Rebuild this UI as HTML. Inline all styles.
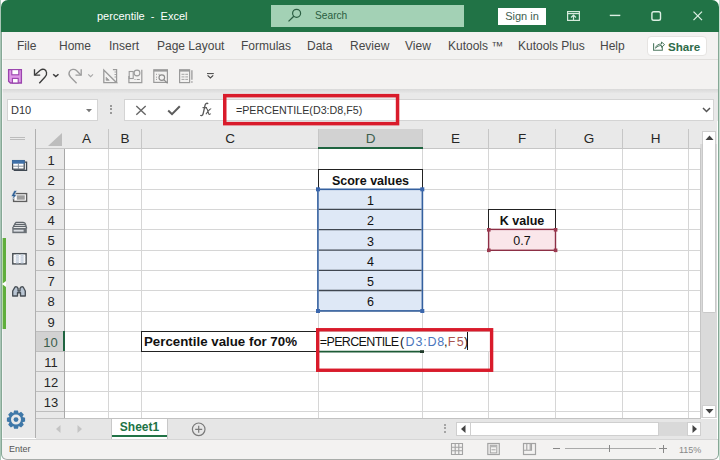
<!DOCTYPE html>
<html><head><meta charset="utf-8">
<style>
*{box-sizing:border-box}
html,body{margin:0;padding:0;width:720px;height:460px;overflow:hidden;background:#fff}
body{position:relative;font-family:"Liberation Sans",sans-serif;color:#333}
.a{position:absolute}
#frameL{left:0;top:0;width:1px;height:460px;background:#a9c6b6}
#frameR{left:719px;top:0;width:1px;height:460px;background:#c9dfd1}
#frame{left:1px;top:32px;width:718px;height:428px;border:1px solid #86a896;border-bottom-color:#a8aca9;border-top:none;border-radius:0 0 6px 6px;pointer-events:none}
#title{left:1px;top:0;width:718px;height:32px;background:#217346;border-radius:7px 7px 0 0}
.ttl{top:9px;font-size:11px;color:#fff;white-space:pre;line-height:14px}
#search{left:271px;top:5px;width:193px;height:22px;background:#a3d1b5}
#signin{left:498px;top:8px;width:48px;height:17px;background:#fff;color:#3f6150;font-size:11px;line-height:17px;text-align:center}
#ribbon{left:1px;top:32px;width:717px;height:58px;background:#f3f2f1}
.tab{top:38px;font-size:12px;color:#474747;white-space:pre;line-height:16px}
#sep1{left:1px;top:59px;width:717px;height:1px;background:#e1dfdd}
#share{left:647px;top:36px;width:60px;height:20px;background:#fff;border:1px solid #e6e4e2;border-radius:4px}
#band{left:1px;top:89px;width:717px;height:4px;background:linear-gradient(#d9d9d9,#e6e6e6)}
#fbar{left:1px;top:93px;width:717px;height:28px;background:#e9e9e9}
.wbox{background:#fff;border:1px solid #d4d4d4}
#panel{left:1px;top:121px;width:35px;height:317px;background:#e9e9e9}
#pline{left:35px;top:129px;width:1px;height:309px;background:#b0b0b0}
#hdr{left:36px;top:121px;width:681px;height:28px;background:#e9e9e9}
#cells{left:64px;top:149px;width:636px;height:270px;background:#fff}
#rhdr{left:36px;top:149px;width:28px;height:269px;background:#e9e9e9}
.hl{position:absolute;left:64px;width:636px;height:1px;background:#d6d6d6}
.vl{position:absolute;top:149px;width:1px;height:269px;background:#d6d6d6}
.chs{position:absolute;top:129px;width:1px;height:20px;background:#c6c6c6}
.rhs{position:absolute;left:36px;width:28px;height:1px;background:#bdbdbd}
.ch{position:absolute;top:129px;height:19px;line-height:19px;text-align:center;font-size:13.5px;color:#262626}
.ch.sel{background:#d2d2d2;color:#3b5e4c}
.rn{position:absolute;left:37px;width:28px;text-align:center;font-size:13px;color:#262626}
.rn.sel{background:#d2d2d2;color:#3b5e4c;left:36px;width:28px;padding-left:1px}
#hdrline{left:36px;top:148px;width:664px;height:1px;background:#c6c6c6}
#rhline{left:64px;top:149px;width:1px;height:269px;background:#a9a9a9}
.cell{position:absolute;font-size:12.5px;color:#111;white-space:pre;line-height:20px}
#vscroll{left:700px;top:144px;width:17px;height:274px;background:#dadada}
#tabbar{left:36px;top:419px;width:681px;height:20px;background:#e6e6e6}
#status{left:1px;top:439px;width:717px;height:20px;background:#f3f2f1;border-top:1px solid #d6d6d6;border-radius:0 0 6px 6px}
</style></head><body>
<div class="a" id="frameL"></div>
<div class="a" id="frameR"></div>
<div class="a" id="title"></div>
<div class="a ttl" style="left:97px">percentile  -  Excel</div>
<div class="a" id="search"></div>
<svg class="a" style="left:286px;top:7px" width="16" height="16" viewBox="286 7 16 16"><circle cx="296.6" cy="13.3" r="4" fill="none" stroke="#2b5e42" stroke-width="1.2"/><line x1="293.8" y1="16.2" x2="288.5" y2="21.4" stroke="#2b5e42" stroke-width="1.3"/></svg>
<div class="a" style="left:315px;top:9px;font-size:10.2px;line-height:14px;color:#2a5d41">Search</div>
<div class="a" id="signin">Sign in</div>
<svg class="a" style="left:567px;top:11px" width="13" height="10" viewBox="0 0 13 10"><rect x="0.6" y="0.6" width="11.8" height="8.8" fill="none" stroke="#d5eadc" stroke-width="1.2"/><line x1="0.6" y1="2.6" x2="12.4" y2="2.6" stroke="#d5eadc" stroke-width="1.2"/><path d="M4 6.5 L6.5 4 L9 6.5 M6.5 4 V9.4" fill="none" stroke="#d5eadc" stroke-width="1.2"/></svg>
<svg class="a" style="left:600px;top:0" width="115" height="30" viewBox="600 0 115 30"><path d="M609.8 15.4 H620.3" stroke="#dcefe3" stroke-width="1.4"/><rect x="651.9" y="11.7" width="8.6" height="8.6" rx="1.8" fill="none" stroke="#dcefe3" stroke-width="1.4"/><path d="M693.5 11.6 L702 20.1 M702 11.6 L693.5 20.1" stroke="#dcefe3" stroke-width="1.3"/></svg>



<div class="a" id="ribbon"></div>
<div class="a tab" style="left:17px">File</div>
<div class="a tab" style="left:59px">Home</div>
<div class="a tab" style="left:109px">Insert</div>
<div class="a tab" style="left:157px">Page Layout</div>
<div class="a tab" style="left:241px">Formulas</div>
<div class="a tab" style="left:307px">Data</div>
<div class="a tab" style="left:350px">Review</div>
<div class="a tab" style="left:405px">View</div>
<div class="a tab" style="left:448px">Kutools ™</div>
<div class="a tab" style="left:518px">Kutools Plus</div>
<div class="a tab" style="left:600px">Help</div>
<div class="a" id="share"></div>
<svg class="a" style="left:650px;top:38px" width="17" height="15" viewBox="650 38 17 15"><path d="M653.6 43.3 V50.2 H662.3 V46" fill="none" stroke="#4f7a62" stroke-width="1.1"/><path d="M655.6 48.2 C656 45.5 658 44 661.5 44 V42 L664.6 44.6 L661.5 47.3 V45.5 C659 45.5 657 46.5 655.6 48.2 Z" fill="none" stroke="#4f7a62" stroke-width="1" stroke-linejoin="round"/></svg>
<div class="a" style="left:668px;top:38.5px;font-size:11.6px;line-height:15px;font-weight:bold;color:#2f6b4a">Share</div>
<div class="a" id="sep1"></div>

<!-- QAT -->
<svg class="a" style="left:0;top:60px" width="220" height="30" viewBox="0 60 220 30">
<path d="M8.6 69.6 H21.4 V83 H10.4 L8.6 81.2 Z" fill="#df9ae8" stroke="#9a44ad" stroke-width="1.3"/>
<rect x="11.8" y="69.6" width="7" height="5.2" fill="#fff" stroke="#9a44ad" stroke-width="1.1"/>
<rect x="12.4" y="78.4" width="5.8" height="4.6" fill="#fff" stroke="#9a44ad" stroke-width="1.1"/>
<path d="M34.5 69.3 V75.1 H40.2" fill="none" stroke="#3c3c3c" stroke-width="1.35"/>
<path d="M34.8 75 L40.5 70 C43 68.3 46 69.5 46.5 72.5 C47 74.5 46 76 45 77 L39.3 83.2" fill="none" stroke="#3c3c3c" stroke-width="1.35"/>
<path d="M53.2 74.2 L55.8 76.6 L58.5 74.2" fill="none" stroke="#3c3c3c" stroke-width="1.5"/>
<path d="M81.2 69.3 V75.1 H75.5" fill="none" stroke="#9c9c9c" stroke-width="1.35"/>
<path d="M80.9 75 L76.5 70.5 C74.5 68.8 71 69 69.5 71.5 C68.5 73.5 69 75.5 70.5 77 L76.6 83.2" fill="none" stroke="#9c9c9c" stroke-width="1.35"/>
<path d="M88.2 74.4 L90.6 76.6 L93 74.4" fill="none" stroke="#a8a8a8" stroke-width="1.2"/>
<path d="M103.8 70 V82.7 H116.6 Z" fill="none" stroke="#9a9a9a" stroke-width="1.3"/>
<path d="M106.2 77.3 V80.3 H109.2 Z" fill="#9a9a9a" stroke="#9a9a9a" stroke-width="0.8"/>
<path d="M112.9 69.6 H116.6 V82.7" fill="none" stroke="#9a9a9a" stroke-width="1.2"/>
<path d="M114.5 72 H116.6 M114.5 74.5 H116.6 M114.5 77 H116.6" stroke="#9a9a9a" stroke-width="0.9"/>
<path d="M128.9 76 V82.7 H141.8 V69.8" fill="none" stroke="#9a9a9a" stroke-width="1.2"/>
<rect x="129.2" y="71.5" width="4" height="7" fill="none" stroke="#9a9a9a" stroke-width="1.1"/>
<circle cx="137" cy="73" r="2.9" fill="none" stroke="#9a9a9a" stroke-width="1.1"/>
<path d="M134.5 79.5 H135.5 M136.7 79.5 H139.8" stroke="#9a9a9a" stroke-width="1"/>
<rect x="153.8" y="69.8" width="13.6" height="12.6" fill="none" stroke="#9a9a9a" stroke-width="1.2"/>
<rect x="153.8" y="69.8" width="13.6" height="1.8" fill="#9a9a9a"/>
<circle cx="161.8" cy="77.6" r="2.8" fill="none" stroke="#8c8c8c" stroke-width="1.2"/>
<path d="M163.8 79.6 L167.6 83.4" stroke="#8c8c8c" stroke-width="1.3"/>
<path d="M156 74.3 H157 M156 77.2 H157 M156 79.4 H157 M158.5 74.3 H159.5" stroke="#9a9a9a" stroke-width="1"/>
<rect x="179.6" y="69.8" width="10" height="12.8" fill="none" stroke="#9a9a9a" stroke-width="1.2"/>
<rect x="179.6" y="69.8" width="10" height="1.8" fill="#9a9a9a"/>
<path d="M181.5 74.3 H188 M181.5 76.9 H188 M181.5 79.4 H188" stroke="#a5a5a5" stroke-width="1" stroke-dasharray="3 0.8"/>
<path d="M191.9 70.2 V79.7 M191.9 81.2 V82.7" stroke="#9a9a9a" stroke-width="1.3"/>
<path d="M207 73.6 H213.8" stroke="#444" stroke-width="1"/>
<path d="M207.6 75.4 L210.4 77.9 L213.2 75.4" fill="none" stroke="#444" stroke-width="1.2"/>
</svg>
<div class="a" id="band"></div>
<div class="a" id="fbar"></div>
<div class="a wbox" style="left:7px;top:99px;width:91px;height:22px"></div>
<div class="a" style="left:11px;top:103px;font-size:11px;line-height:14px;color:#333">D10</div>
<svg class="a" style="left:85.5px;top:108.5px" width="6" height="4" viewBox="0 0 6 4"><path d="M0 0 H6 L3 3.2 Z" fill="#777"/></svg>
<div class="a" style="left:110px;top:105px;width:2px;height:2px;background:#999"></div>
<div class="a" style="left:110px;top:108.3px;width:2px;height:2px;background:#999"></div>
<div class="a" style="left:110px;top:112px;width:2px;height:2px;background:#999"></div>
<div class="a wbox" style="left:124px;top:99px;width:100px;height:22px"></div>
<svg class="a" style="left:135px;top:105px" width="12" height="11" viewBox="0 0 12 11"><path d="M1.3 1 L10.7 9.8 M10.7 1 L1.3 9.8" stroke="#666" stroke-width="1.4"/></svg>
<svg class="a" style="left:167px;top:105px" width="14" height="11" viewBox="0 0 14 11"><path d="M1.2 5.5 L5 9.2 L12.8 1.2" fill="none" stroke="#5c5c5c" stroke-width="2"/></svg>
<svg class="a" style="left:196px;top:100px" width="20" height="18" viewBox="196 100 20 18"><path d="M208.2 103.8 C207.2 102.8 205.6 103.2 205.1 105 L203.2 113.5 C202.7 115.6 201.5 116 200.2 115.2" fill="none" stroke="#5a5a5a" stroke-width="1.3"/><path d="M202.5 107.6 H207" stroke="#5a5a5a" stroke-width="1.1"/><path d="M205.8 108.6 C206.8 108.3 207.3 109 207.7 110.5 L208.6 113.5 C209 114.6 209.8 114.6 210.8 113.7 M211.2 108.8 C210.2 108.5 209.3 109.6 207.8 111.6 L205.9 114.2" fill="none" stroke="#5a5a5a" stroke-width="1.1"/></svg>
<div class="a wbox" style="left:223px;top:99px;width:491px;height:22px"></div>
<div class="a" style="left:236px;top:103px;font-size:10.7px;line-height:14px;color:#333;white-space:pre">=PERCENTILE(D3:D8,F5)</div>
<svg class="a" style="left:702px;top:107px" width="9" height="6" viewBox="0 0 9 6"><path d="M1 1 L4.5 4.5 L8 1" fill="none" stroke="#555" stroke-width="1.5"/></svg>

<div class="a" id="panel"></div>
<div class="a" id="pline"></div>
<div class="a" style="left:10px;top:137px;width:15px;height:1px;background:#bcbcbc"></div>
<div class="a" style="left:10px;top:139px;width:15px;height:1px;background:#bcbcbc"></div>

<div class="a" id="hdr"></div>
<div class="a" id="rhdr"></div>
<div class="a" id="cells"></div>
<div class="hl" style="top:169px"></div>
<div class="hl" style="top:189px"></div>
<div class="hl" style="top:209px"></div>
<div class="hl" style="top:229px"></div>
<div class="hl" style="top:250px"></div>
<div class="hl" style="top:270px"></div>
<div class="hl" style="top:290px"></div>
<div class="hl" style="top:311px"></div>
<div class="hl" style="top:331px"></div>
<div class="hl" style="top:351px"></div>
<div class="hl" style="top:371px"></div>
<div class="hl" style="top:391px"></div>
<div class="hl" style="top:411px"></div>
<div class="vl" style="left:108px"></div>
<div class="vl" style="left:141px"></div>
<div class="vl" style="left:318px"></div>
<div class="vl" style="left:422px"></div>
<div class="vl" style="left:488px"></div>
<div class="vl" style="left:555px"></div>
<div class="vl" style="left:622px"></div>
<div class="vl" style="left:688px"></div>
<div class="chs" style="left:108px"></div>
<div class="chs" style="left:141px"></div>
<div class="chs" style="left:318px"></div>
<div class="chs" style="left:422px"></div>
<div class="chs" style="left:488px"></div>
<div class="chs" style="left:555px"></div>
<div class="chs" style="left:622px"></div>
<div class="chs" style="left:688px"></div>
<div class="rhs" style="top:169px"></div>
<div class="rhs" style="top:189px"></div>
<div class="rhs" style="top:209px"></div>
<div class="rhs" style="top:229px"></div>
<div class="rhs" style="top:250px"></div>
<div class="rhs" style="top:270px"></div>
<div class="rhs" style="top:290px"></div>
<div class="rhs" style="top:311px"></div>
<div class="rhs" style="top:331px"></div>
<div class="rhs" style="top:351px"></div>
<div class="rhs" style="top:371px"></div>
<div class="rhs" style="top:391px"></div>
<div class="rhs" style="top:411px"></div>
<div class="ch" style="left:65px;width:43px">A</div>
<div class="ch" style="left:109px;width:32px">B</div>
<div class="ch" style="left:142px;width:176px">C</div>
<div class="ch sel" style="left:319px;width:103px">D</div>
<div class="ch" style="left:423px;width:65px">E</div>
<div class="ch" style="left:489px;width:66px">F</div>
<div class="ch" style="left:556px;width:66px">G</div>
<div class="ch" style="left:623px;width:65px">H</div>
<div class="rn" style="top:150px;height:19px;line-height:21px">1</div>
<div class="rn" style="top:170px;height:19px;line-height:21px">2</div>
<div class="rn" style="top:190px;height:19px;line-height:21px">3</div>
<div class="rn" style="top:210px;height:19px;line-height:21px">4</div>
<div class="rn" style="top:230px;height:20px;line-height:22px">5</div>
<div class="rn" style="top:251px;height:19px;line-height:21px">6</div>
<div class="rn" style="top:271px;height:19px;line-height:21px">7</div>
<div class="rn" style="top:291px;height:20px;line-height:22px">8</div>
<div class="rn" style="top:312px;height:19px;line-height:21px">9</div>
<div class="rn sel" style="top:332px;height:19px;line-height:21px">10</div>
<div class="rn" style="top:352px;height:19px;line-height:21px">11</div>
<div class="rn" style="top:372px;height:19px;line-height:21px">12</div>
<div class="rn" style="top:392px;height:19px;line-height:21px">13</div>

<div class="a" id="hdrline"></div>
<div class="a" id="rhline"></div>
<div class="a" style="left:318px;top:147px;width:105px;height:2px;background:#1f6440"></div>
<div class="a" style="left:63px;top:331px;width:2px;height:20px;background:#1f6440"></div>
<svg class="a" style="left:48px;top:133px" width="14" height="13" viewBox="0 0 14 13"><path d="M14 0 V13 H0 Z" fill="#bdbdbd"/></svg>


<!-- cell contents -->
<div class="a" style="left:318px;top:169px;width:105px;height:21px;border:1px solid #222"></div>
<div class="cell" style="left:318px;top:171px;width:105px;text-align:center;font-weight:bold">Score values</div>
<svg class="a" style="left:0;top:0" width="720" height="460" viewBox="0 0 720 460">
<rect x="317.9" y="189.3" width="104.5" height="121.6" fill="#dee8f6" stroke="#34609f" stroke-width="1.6"/>
<path d="M318.7 209.4 H421.6 M318.7 229.6 H421.6 M318.7 250.2 H421.6 M318.7 270.4 H421.6 M318.7 290.5 H421.6" stroke="#3f4650" stroke-width="1.3"/>
<rect x="316" y="187.3" width="4" height="4" fill="#3b67ad"/>
<rect x="420.3" y="187.3" width="4" height="4" fill="#3b67ad"/>
<rect x="316" y="309" width="4" height="4" fill="#3b67ad"/>
<rect x="420.3" y="309" width="4" height="4" fill="#3b67ad"/>
</svg>
<div class="cell" style="left:318px;top:191px;width:105px;text-align:center">1</div>
<div class="cell" style="left:318px;top:211px;width:105px;text-align:center">2</div>
<div class="cell" style="left:318px;top:232px;width:105px;text-align:center">3</div>
<div class="cell" style="left:318px;top:252px;width:105px;text-align:center">4</div>
<div class="cell" style="left:318px;top:272px;width:105px;text-align:center">5</div>
<div class="cell" style="left:318px;top:292px;width:105px;text-align:center">6</div>

<div class="a" style="left:488px;top:209px;width:68px;height:21px;border:1px solid #222"></div>
<div class="cell" style="left:488px;top:211px;width:68px;text-align:center;font-weight:bold">K value</div>
<svg class="a" style="left:0;top:0" width="720" height="460" viewBox="0 0 720 460">
<rect x="488.6" y="229.4" width="66.9" height="20.9" fill="#fae6ea" stroke="#8c2f45" stroke-width="1.4"/>
<rect x="487" y="228" width="3.6" height="3.6" fill="#9b3a50"/>
<rect x="553.8" y="228" width="3.6" height="3.6" fill="#9b3a50"/>
<rect x="487" y="248.5" width="3.6" height="3.6" fill="#9b3a50"/>
<rect x="553.8" y="248.5" width="3.6" height="3.6" fill="#9b3a50"/>
</svg>
<div class="cell" style="left:488px;top:231px;width:68px;text-align:center">0.7</div>

<div class="a" style="left:141px;top:331px;width:178px;height:21px;border:1px solid #222"></div>
<div class="cell" style="left:144px;top:332px;font-weight:bold;font-size:13.3px">Percentile value for 70%</div>
<div class="a" style="left:319px;top:332px;width:170px;height:19px;background:#fff"></div>
<div class="cell" style="left:319.8px;top:332px;letter-spacing:-0.65px">=PERCENTILE</div>
<div class="cell" style="left:400px;top:332px">(</div>
<div class="cell" style="left:405.6px;top:332px;letter-spacing:0.8px;color:#4a76bd">D3:D8</div>
<div class="cell" style="left:443.9px;top:332px">,</div>
<div class="cell" style="left:447.8px;top:332px;letter-spacing:1.2px;color:#a8564f">F5</div>
<div class="cell" style="left:464px;top:332px">)</div>
<div class="a" style="left:467px;top:332px;width:1px;height:18px;background:#111"></div>
<svg class="a" style="left:0;top:0" width="720" height="460" viewBox="0 0 720 460"><path d="M318 351.6 H420" stroke="#1d5a36" stroke-width="1.6"/><rect x="420" y="350.2" width="4" height="2.8" fill="#1f3a2a"/></svg>

<svg class="a" style="left:0;top:0" width="720" height="460" viewBox="0 0 720 460"><rect x="224.75" y="95.65" width="172.8" height="28" fill="none" stroke="#d91b2b" stroke-width="3.5"/><rect x="317.7" y="329.75" width="173.9" height="40.5" fill="none" stroke="#d91b2b" stroke-width="3.4"/></svg>

<div class="a" id="vscroll"></div>
<div class="a" id="tabbar"></div>
<div class="a" id="status"></div>
<div class="a" style="left:9px;top:443px;font-size:9px;line-height:13px;color:#555">Enter</div>

<!-- vertical scrollbar -->
<div class="a" style="left:702px;top:131px;width:14px;height:14px;background:#fff;border:1px solid #cfcfcf"></div>
<svg class="a" style="left:705px;top:135px" width="9" height="5" viewBox="0 0 9 5"><path d="M0.5 5 L4.5 0.5 L8.5 5 Z" fill="#444"/></svg>
<div class="a" style="left:702px;top:144px;width:14px;height:169px;background:#fff;border:1px solid #c9c9c9;border-top:none;border-radius:0 0 2px 2px"></div>
<div class="a" style="left:702px;top:405px;width:14px;height:13px;background:#fff;border:1px solid #cfcfcf"></div>
<svg class="a" style="left:705px;top:409px" width="9" height="5" viewBox="0 0 9 5"><path d="M0.5 0 L4.5 4.5 L8.5 0 Z" fill="#444"/></svg>
<div class="a" style="left:700px;top:148px;width:1px;height:270px;background:#c6c6c6"></div>
<div class="a" style="left:36px;top:418px;width:665px;height:1px;background:#c2c2c2"></div>

<!-- tab bar -->
<svg class="a" style="left:56px;top:425px" width="5" height="8" viewBox="0 0 5 8"><path d="M4.5 0 V8 L0 4 Z" fill="#c4c4c4"/></svg>
<svg class="a" style="left:77px;top:425px" width="5" height="8" viewBox="0 0 5 8"><path d="M0.5 0 V8 L5 4 Z" fill="#c4c4c4"/></svg>
<div class="a" style="left:111px;top:419px;width:57px;height:20px;background:#fff;border-left:1px solid #c8c8c8;border-right:1px solid #c8c8c8"></div>
<div class="a" style="left:112px;top:435px;width:55px;height:2px;background:#217346"></div>
<div class="a" style="left:111px;top:420px;width:57px;line-height:15px;text-align:center;font-size:12px;font-weight:bold;color:#217346">Sheet1</div>
<svg class="a" style="left:190px;top:422px" width="17" height="15" viewBox="0 0 17 15"><circle cx="8.7" cy="7.3" r="6.3" fill="none" stroke="#7a7a7a" stroke-width="1.2"/><path d="M8.7 3.8 V10.8 M5.2 7.3 H12.2" stroke="#7a7a7a" stroke-width="1.2"/></svg>
<div class="a" style="left:443.5px;top:423.6px;width:2px;height:2px;background:#a5a5a5"></div>
<div class="a" style="left:443.5px;top:427.4px;width:2px;height:2px;background:#a5a5a5"></div>
<div class="a" style="left:443.5px;top:431.1px;width:2px;height:2px;background:#a5a5a5"></div>
<div class="a" style="left:457px;top:422px;width:244px;height:14px;background:#d9d9d9"></div>
<div class="a" style="left:456px;top:422px;width:15px;height:14px;background:#fff;border:1px solid #cfcfcf"></div>
<svg class="a" style="left:461px;top:425px" width="5" height="8" viewBox="0 0 5 8"><path d="M4.5 0 V8 L0 4 Z" fill="#444"/></svg>
<div class="a" style="left:470px;top:422px;width:189px;height:14px;background:#fff;border:1px solid #cfcfcf"></div>
<div class="a" style="left:687px;top:422px;width:14px;height:14px;background:#fff;border:1px solid #cfcfcf"></div>
<svg class="a" style="left:692px;top:425px" width="5" height="8" viewBox="0 0 5 8"><path d="M0.5 0 V8 L5 4 Z" fill="#444"/></svg>

<!-- status bar icons -->
<svg class="a" style="left:0;top:430px" width="560" height="30" viewBox="0 430 560 30">
<path d="M451.5 443.5 H462.5 V454.5 H451.5 Z M451.5 447.2 H462.5 M451.5 450.8 H462.5 M455.2 443.5 V454.5 M458.8 443.5 V454.5" fill="none" stroke="#a3a3a3" stroke-width="1.1"/>
<rect x="487.8" y="443.5" width="11.5" height="11" fill="none" stroke="#a3a3a3" stroke-width="1.2"/>
<rect x="490.3" y="445.3" width="6.5" height="7.6" fill="none" stroke="#a3a3a3" stroke-width="1"/>
<rect x="490.3" y="445.3" width="6.5" height="2" fill="#b5b5b5"/>
<path d="M491.5 449.8 H495.6" stroke="#a3a3a3" stroke-width="1"/>
<rect x="523.5" y="443.5" width="12" height="11" fill="none" stroke="#a3a3a3" stroke-width="1.2"/>
<path d="M526.8 443.5 V450 M530.2 443.5 V450 M523.5 450.2 H531.5 V443.5" fill="none" stroke="#a3a3a3" stroke-width="1.1"/>
</svg>
<div class="a" style="left:553px;top:448px;width:7px;height:1px;background:#888"></div>
<div class="a" style="left:565px;top:448px;width:91px;height:1px;background:#aaa"></div>
<div class="a" style="left:609px;top:445px;width:1px;height:7px;background:#888"></div>
<div class="a" style="left:659px;top:448px;width:8px;height:1px;background:#888"></div>
<div class="a" style="left:662.5px;top:444.5px;width:1px;height:8px;background:#888"></div>
<div class="a" style="left:679px;top:443.5px;font-size:9px;color:#999;line-height:13px;color:#888">115%</div>

<!-- panel icons -->
<svg class="a" style="left:0;top:150px" width="36" height="290" viewBox="0 150 36 290">
<path d="M14.3 169.5 V170.3 H26.6 V162 H24.5" fill="none" stroke="#3f4852" stroke-width="1.25"/>
<rect x="12.6" y="160.6" width="11.6" height="8.6" fill="#fff" stroke="#3f4852" stroke-width="1.25"/>
<rect x="12.1" y="160.1" width="12.6" height="3.6" fill="#3f70a8"/>
<path d="M12.6 166.2 H24.2 M18.4 163.5 V169" stroke="#7e8a96" stroke-width="0.9"/>
<rect x="13.6" y="193.6" width="13" height="7.8" fill="#fff" stroke="#5e5e5e" stroke-width="1.4"/>
<rect x="16.8" y="195.3" width="8" height="4.4" fill="#9c9c9c"/>
<path d="M14.2 190.6 L11 196.6 H13.3 L11.3 201.2 L17 194.4 H14.7 L17.2 190.6 Z" fill="#2d5f95" stroke="#e9e9e9" stroke-width="0.7"/>
<path d="M14.6 224.2 L16 222.4 H23.2 Q25.2 222.6 25.8 224.6" fill="#f4f4f4" stroke="#5f666c" stroke-width="1.15"/>
<path d="M13.5 226.2 L14.8 224.4 H24.2 Q26.1 224.7 26.4 226.6" fill="#f4f4f4" stroke="#5f666c" stroke-width="1.15"/>
<path d="M12.5 228.2 L13.6 226.4 H25 Q26.7 226.7 26.8 228.4" fill="#f4f4f4" stroke="#5f666c" stroke-width="1.15"/>
<path d="M12.3 227.9 H26.8 V233.2 H12.3 Z" fill="#6a7076"/>
<rect x="13.6" y="229.7" width="10" height="1.9" fill="#d9dde2"/>
<rect x="12.8" y="253.7" width="13.3" height="10.2" fill="#fff" stroke="#4a5056" stroke-width="1.45"/>
<rect x="15.9" y="254.4" width="3" height="9" fill="#c8d3e0"/>
<rect x="20.6" y="254.4" width="3" height="9" fill="#c8d3e0"/>
<path d="M13.5 256.8 H25.4 M13.5 259 H25.4 M13.5 261.2 H25.4" stroke="#dfe5ec" stroke-width="0.8"/>
<path d="M12.7 296 V291 L14.8 287.3 Q15.7 286.2 17 287 L18.1 288.5 V291 H20 V288.5 L21.1 287 Q22.4 286.2 23.3 287.3 L25.3 291 V296 H20.5 V292.7 H17.5 V296 Z" fill="#b9c5d3" stroke="#474e55" stroke-width="1.35" stroke-linejoin="round"/>
<path fill="#3f78a8" fill-rule="evenodd" d="M18.67 413.13 L17.93 410.50 L14.07 410.50 L13.33 413.13 L13.31 413.14 L10.93 411.80 L8.20 414.53 L9.54 416.91 L9.53 416.93 L6.90 417.67 L6.90 421.53 L9.53 422.27 L9.54 422.29 L8.20 424.67 L10.93 427.40 L13.31 426.06 L13.33 426.07 L14.07 428.70 L17.93 428.70 L18.67 426.07 L18.69 426.06 L21.07 427.40 L23.80 424.67 L22.46 422.29 L22.47 422.27 L25.10 421.53 L25.10 417.67 L22.47 416.93 L22.46 416.91 L23.80 414.53 L21.07 411.80 L18.69 413.14 M16 414.6 A5 5 0 1 0 16 424.6 A5 5 0 1 0 16 414.6 Z"/>
<circle cx="16" cy="419.6" r="2.4" fill="#3f78a8"/>
</svg>
<div class="a" style="left:1px;top:238px;width:5px;height:91px;background:#5fae3c"></div>
<svg class="a" style="left:2px;top:281px" width="4" height="6" viewBox="0 0 4 6"><path d="M4 0 V6 L0 3 Z" fill="#fff"/></svg>

<div class="a" style="left:2px;top:32px;width:1px;height:406px;background:rgba(255,255,255,0.55)"></div>
<div class="a" id="frame"></div>
</body></html>
